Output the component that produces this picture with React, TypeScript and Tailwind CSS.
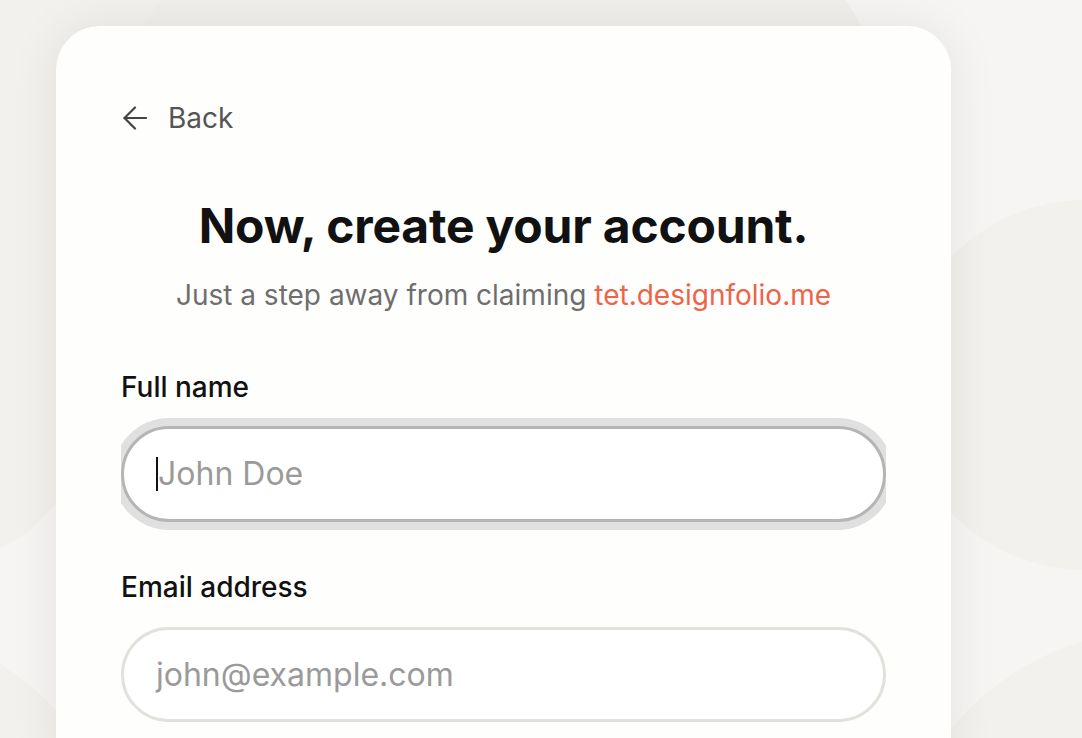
import React from "react";

export default function App() {
  return (
    <div
      className="relative h-[738px] w-full overflow-hidden bg-[#f6f5f3]"
      style={{ fontFamily: "Inter, 'Noto Sans', sans-serif" }}
    >
      {/* decorative background circles */}
      <div className="pointer-events-none absolute inset-0">
        <div className="absolute left-[-260px] top-[-160px] h-[520px] w-[520px] rounded-full bg-[#f2f1ee]" />
        <div className="absolute left-[91px] top-[-183px] h-[824px] w-[824px] rounded-full bg-[#f0efec]" />
        <div className="absolute left-[900px] top-[200px] h-[370px] w-[370px] rounded-full bg-[#f2f1ed]" />
        <div className="absolute left-[890px] top-[630px] h-[540px] w-[540px] rounded-full bg-[#f2f1ed]" />
        <div className="absolute left-[-202px] top-[278px] h-[284px] w-[284px] rounded-full bg-[#f2f1ee]" />
        <div className="absolute left-[-430px] top-[620px] h-[560px] w-[560px] rounded-full bg-[#f2f1ee]" />
      </div>

      <div className="relative pl-[56px] pt-[26px]">
        <div className="h-[760px] w-[895px] rounded-[44px] bg-[#fefefd] px-[65px] pt-[76px] shadow-[0_0_50px_rgba(0,0,0,0.08)]">
          <div className="flex h-[32px] items-center gap-[21px] text-[#555555]">
            <svg width="24" height="24" viewBox="0 0 24 24" fill="none" stroke="#444444" strokeWidth="2.2" strokeLinecap="round" strokeLinejoin="round" className="ml-[2px]">
              <path d="M23 12H1.5" />
              <path d="M12 1.5L1.5 12L12 22.5" />
            </svg>
            <span className="text-[28px] leading-[32px]">Back</span>
          </div>

          <h1 className="mt-[64px] text-center text-[48px] font-bold leading-[56px] tracking-[-0.2px] text-[#111111]">
            Now, create your account.
          </h1>
          <p className="mt-[25px] text-center text-[28px] leading-[32px] text-[#6e6e6e]">
            Just a step away from claiming{" "}
            <span className="text-[#ee6449]">tet.designfolio.me</span>
          </p>

          <div className="mt-[60px] flex flex-col">
            <label className="text-[28px] font-medium leading-[32px] text-[#111111]">Full name</label>
            <div className="mt-[23px] [clip-path:inset(-12px_0px)]">
              <div className="flex h-[96px] items-center rounded-full border-[3px] border-[#b5b5b5] bg-white pl-[32px] shadow-[0_0_0_8px_#e0e0e0]">
                <span className="h-[34px] w-[2px] bg-[#111111]" />
                <span className="text-[32px] text-[#9a9a9a]">John Doe</span>
              </div>
            </div>

            <label className="mt-[49px] text-[28px] font-medium leading-[32px] text-[#111111]">Email address</label>
            <div className="mt-[24px] flex h-[95px] items-center rounded-full border-[3px] border-[#e3e1dc] bg-white pl-[32px]">
              <span className="text-[32px] text-[#9a9a9a]">john@example.com</span>
            </div>
          </div>
        </div>
      </div>
    </div>
  );
}
